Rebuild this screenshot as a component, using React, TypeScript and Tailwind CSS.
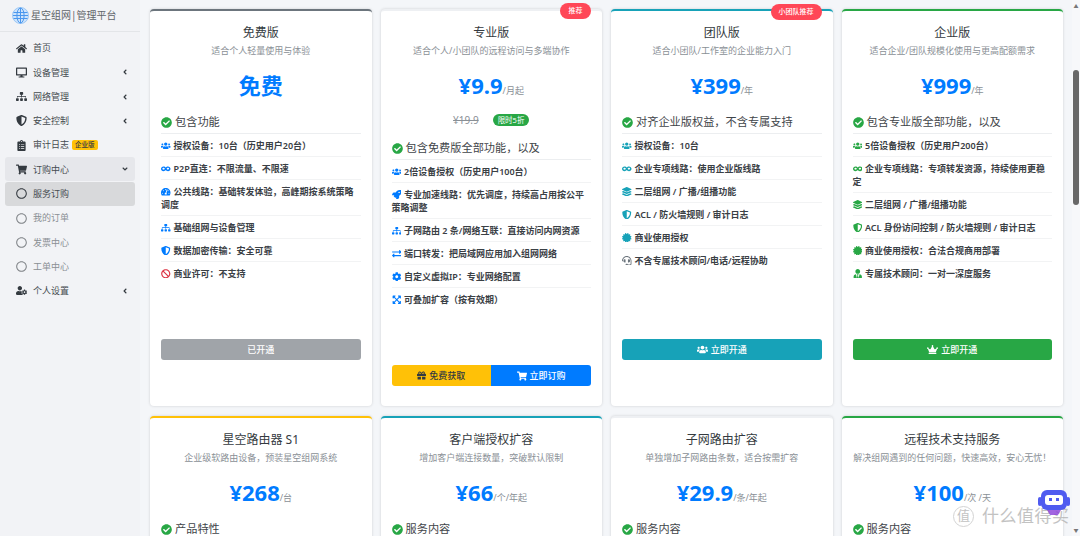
import React from "react";
import {
  FaHome, FaDesktop, FaSitemap, FaShieldAlt, FaClipboardList, FaShoppingCart, FaRegCircle, FaUserCog,
  FaAngleLeft, FaAngleDown, FaCheckCircle, FaUsers, FaInfinity, FaTachometerAlt, FaBan, FaRocket,
  FaExchangeAlt, FaCog, FaExpandArrowsAlt, FaLayerGroup, FaCertificate, FaHeadset, FaUserTie, FaGift, FaCrown,
} from "react-icons/fa";

type Item = { icon: React.ElementType; text: string; red?: boolean; gray?: boolean };
type Plan = {
  title: string; sub: string; price: string; unit?: string; top: string; accent: string; heading: string;
  items: Item[]; badge?: string; badgeClass?: string; old?: boolean; button?: React.ReactNode;
};

const plans: Plan[] = [
  {
    title: "免费版", sub: "适合个人轻量使用与体验", price: "免费", top: "border-t-[#6c757d]", accent: "text-[#007bff]", heading: "包含功能",
    items: [
      { icon: FaUsers, text: "授权设备：10台（历史用户20台）" },
      { icon: FaInfinity, text: "P2P直连：不限流量、不限速" },
      { icon: FaTachometerAlt, text: "公共线路：基础转发体验，高峰期按系统策略调度" },
      { icon: FaSitemap, text: "基础组网与设备管理" },
      { icon: FaShieldAlt, text: "数据加密传输：安全可靠" },
      { icon: FaBan, text: "商业许可：不支持", red: true },
    ],
    button: <button className="flex h-[21px] w-full items-center justify-center rounded-[3px] bg-[#a0a4a9] text-[9px] font-medium text-white">已开通</button>,
  },
  {
    title: "专业版", sub: "适合个人/小团队的远程访问与多端协作", price: "¥9.9", unit: "/月起", top: "border-t-[#eef0f3]", accent: "text-[#007bff]", heading: "包含免费版全部功能，以及",
    badge: "推荐", badgeClass: "right-[11px] top-[-8px] w-[31px]", old: true,
    items: [
      { icon: FaUsers, text: "2倍设备授权（历史用户100台）" },
      { icon: FaRocket, text: "专业加速线路：优先调度，持续高占用按公平策略调整" },
      { icon: FaSitemap, text: "子网路由 2 条/网络互联：直接访问内网资源" },
      { icon: FaExchangeAlt, text: "端口转发：把局域网应用加入组网网络" },
      { icon: FaCog, text: "自定义虚拟IP：专业网络配置" },
      { icon: FaExpandArrowsAlt, text: "可叠加扩容（按有效期）" },
    ],
    button: (
      <div className="flex h-[21px] w-full overflow-hidden rounded-[3px] text-[9px] font-medium">
        <button className="flex flex-1 items-center justify-center gap-[3px] bg-[#ffc107] text-[#343a40]"><FaGift className="text-[9px]" />免费获取</button>
        <button className="flex flex-1 items-center justify-center gap-[3px] bg-[#007bff] text-white"><FaShoppingCart className="text-[10px]" />立即订购</button>
      </div>
    ),
  },
  {
    title: "团队版", sub: "适合小团队/工作室的企业能力入门", price: "¥399", unit: "/年", top: "border-t-[#17a2b8]", accent: "text-[#17a2b8]", heading: "对齐企业版权益，不含专属支持",
    badge: "小团队推荐", badgeClass: "right-[11px] top-[-7px] w-[51px]",
    items: [
      { icon: FaUsers, text: "授权设备：10台" },
      { icon: FaInfinity, text: "企业专项线路：使用企业版线路" },
      { icon: FaLayerGroup, text: "二层组网 / 广播/组播功能" },
      { icon: FaShieldAlt, text: "ACL / 防火墙规则 / 审计日志" },
      { icon: FaCertificate, text: "商业使用授权" },
      { icon: FaHeadset, text: "不含专属技术顾问/电话/远程协助", gray: true },
    ],
    button: <button className="flex h-[21px] w-full items-center justify-center gap-[3px] rounded-[3px] bg-[#17a2b8] text-[9px] font-medium text-white"><FaUsers className="text-[11px]" />立即开通</button>,
  },
  {
    title: "企业版", sub: "适合企业/团队规模化使用与更高配额需求", price: "¥999", unit: "/年", top: "border-t-[#28a745]", accent: "text-[#28a745]", heading: "包含专业版全部功能，以及",
    items: [
      { icon: FaUsers, text: "5倍设备授权（历史用户200台）" },
      { icon: FaInfinity, text: "企业专项线路：专项转发资源，持续使用更稳定" },
      { icon: FaLayerGroup, text: "二层组网 / 广播/组播功能" },
      { icon: FaShieldAlt, text: "ACL 身份访问控制 / 防火墙规则 / 审计日志" },
      { icon: FaCertificate, text: "商业使用授权：合法合规商用部署" },
      { icon: FaUserTie, text: "专属技术顾问：一对一深度服务" },
    ],
    button: <button className="flex h-[21px] w-full items-center justify-center gap-[3px] rounded-[3px] bg-[#28a745] text-[9px] font-medium text-white"><FaCrown className="text-[11px]" />立即开通</button>,
  },
];

const extras: Plan[] = [
  { title: "星空路由器 S1", sub: "企业级软路由设备，预装星空组网系统", price: "¥268", unit: "/台", top: "border-t-[#ffc107]", accent: "", heading: "产品特性", items: [] },
  { title: "客户端授权扩容", sub: "增加客户端连接数量，突破默认限制", price: "¥66", unit: "/个/年起", top: "border-t-[#17a2b8]", accent: "", heading: "服务内容", items: [] },
  { title: "子网路由扩容", sub: "单独增加子网路由条数，适合按需扩容", price: "¥29.9", unit: "/条/年起", top: "border-t-[#eef0f3]", accent: "", heading: "服务内容", items: [] },
  { title: "远程技术支持服务", sub: "解决组网遇到的任何问题，快速高效，安心无忧！", price: "¥100", unit: "/次 /天", top: "border-t-[#28a745]", accent: "", heading: "服务内容", items: [] },
];

const nav: { icon: React.ElementType; label: string; arrow?: "left" | "down"; tag?: boolean; cls?: string; sub?: boolean; active?: boolean }[] = [
  { icon: FaHome, label: "首页" },
  { icon: FaDesktop, label: "设备管理", arrow: "left" },
  { icon: FaSitemap, label: "网络管理", arrow: "left" },
  { icon: FaShieldAlt, label: "安全控制", arrow: "left" },
  { icon: FaClipboardList, label: "审计日志", tag: true },
  { icon: FaShoppingCart, label: "订购中心", arrow: "down", cls: "bg-[#e6e7eb]" },
  { icon: FaRegCircle, label: "服务订购", sub: true, active: true },
  { icon: FaRegCircle, label: "我的订单", sub: true },
  { icon: FaRegCircle, label: "发票中心", sub: true },
  { icon: FaRegCircle, label: "工单中心", sub: true },
  { icon: FaUserCog, label: "个人设置", arrow: "left" },
];

function Card({ plan }: { plan: Plan }) {
  return (
    <div className={`relative flex flex-col rounded-[4px] border-t-2 bg-white px-[11px] pb-5 shadow-[0_0_3px_rgba(0,0,0,0.16)] ${plan.top}`}>
      {plan.badge && (
        <span className={`absolute flex h-4 items-center justify-center rounded-full bg-[#ff4757] text-[7px] font-medium text-white ${plan.badgeClass}`}>{plan.badge}</span>
      )}
      <h3 className="mt-[13px] text-center text-[12px] leading-[18px] text-[#343a40]">{plan.title}</h3>
      <p className="mt-[2px] whitespace-nowrap text-center text-[9px] leading-[14px] text-[#8a9096]">{plan.sub}</p>
      <div className="mt-[6px] flex h-[38px] items-end justify-center text-[#007bff]">
        <span className="text-[22px] font-bold leading-[34px]">{plan.price}</span>
        {plan.unit && <span className="mb-[5px] text-[9px] leading-[12px] text-[#8a9096]">{plan.unit}</span>}
      </div>
      {plan.old && (
        <div className="mb-[2px] mt-[12px] flex h-3 items-center justify-center gap-[14px]">
          <s className="text-[10px] text-[#8a9096]">¥19.9</s>
          <span className="rounded-full bg-[#28a745] px-[5px] text-[7.5px] leading-3 text-white">限时5折</span>
        </div>
      )}
      <div className="mt-[11px] flex h-[21px] items-center gap-[3px] border-b border-[#eceef0] pb-[1px] text-[11.2px] text-[#3f4549]">
        <FaCheckCircle className="shrink-0 text-[11px] text-[#28a745]" />
        {plan.heading}
      </div>
      <ul className="min-h-[205px]">
        {plan.items.map((it, i) => {
          const Icon = it.icon;
          const color = it.red ? "text-[#dc3545]" : it.gray ? "text-[#6c757d]" : plan.accent;
          return (
            <li key={i} className={`pb-[4px] pt-[5px] text-[9px] font-semibold leading-[13px] text-[#3a4045] ${i < plan.items.length - 1 ? "border-b border-[#f2f3f4]" : ""}`}>
              <Icon className={`mr-[3px] inline-block align-[-1px] text-[9.5px] ${color}`} />
              {it.text}
            </li>
          );
        })}
      </ul>
      {plan.button}
    </div>
  );
}

export default function App() {
  return (
    <div
      className="relative flex h-[536px] w-[1080px] overflow-hidden bg-[#f4f6f9]"
      style={{ fontFamily: '"Noto Sans", "Noto Sans CJK SC", sans-serif' }}
    >
      <aside className="w-[140px] shrink-0 bg-[#f2f3f6]">
        <div className="flex h-[32px] items-center gap-[2px] border-b border-[#e3e5e8] pl-3">
          <svg width="17" height="17" viewBox="0 0 17 17" fill="none" stroke="#4a97ee" strokeWidth="1">
            <circle cx="8.5" cy="8.5" r="8" fill="#cfe4fb" stroke="#9cc8f6" />
            <ellipse cx="8.5" cy="8.5" rx="3.6" ry="7.5" />
            <path d="M8.5 1v15M1.5 5.5h14M1 8.5h15M1.5 11.5h14" />
          </svg>
          <span className="text-[10px] text-[#5f6469]">星空组网|管理平台</span>
        </div>
        <nav className="mt-[4px] flex flex-col gap-[0.3px] px-[5px]">
          {nav.map((n) => {
            const Icon = n.icon;
            return (
              <div
                key={n.label}
                className={`flex h-[24px] items-center rounded-[3px] pl-[10px] pr-[6px] text-[9px] ${n.active ? "bg-[#d8d9db] text-[#454b50]" : n.sub ? "text-[#8a8f94]" : "text-[#454b50]"} ${n.cls ?? ""}`}
              >
                <span className="mr-[6px] flex w-[12px] justify-center"><Icon className={`text-[11px] ${n.sub && !n.active ? "text-[#808488]" : "text-[#343a40]"}`} /></span>
                <span>{n.label}</span>
                {n.tag && <span className="ml-[3px] rounded-[2px] bg-[#ffc107] px-[3px] text-[6.5px] font-medium leading-[10px] text-[#343a40]">企业版</span>}
                {n.arrow === "left" && <FaAngleLeft className="ml-auto text-[8px] text-[#343a40]" />}
                {n.arrow === "down" && <FaAngleDown className="ml-auto text-[8px] text-[#343a40]" />}
              </div>
            );
          })}
        </nav>
      </aside>

      <main className="min-w-0 flex-1 overflow-hidden pb-0 pl-[10px] pr-[9px] pt-[9px]">
        <div className="grid grid-cols-4 gap-x-[9px] gap-y-[10px]">
          {plans.map((p) => <Card key={p.title} plan={p} />)}
          {extras.map((p) => <Card key={p.title} plan={p} />)}
        </div>
      </main>

      <div className="flex w-[8px] shrink-0 flex-col items-center bg-[#f7f8fa]">
        <span className="mt-[3px] text-[5px] leading-[6px] text-[#777]">▲</span>
        <div className="mt-[61px] h-[135px] w-[6px] rounded-full bg-[#686868]" />
        <span className="mb-[3px] mt-auto text-[5px] leading-[6px] text-[#777]">▼</span>
      </div>

      <div className="absolute left-[953px] top-[505px] flex items-center gap-2 text-[#b4b4b4] opacity-80">
        <span className="flex size-[21px] items-center justify-center rounded-full border border-[#c9c9c9] text-[13px]">值</span>
        <span className="text-[17px] leading-[22px] tracking-[0.5px]">什么值得买</span>
      </div>
      <svg className="absolute left-[1038px] top-[490px]" width="32" height="26" viewBox="0 0 32 26">
        <rect x="0" y="7" width="4" height="9" rx="2" fill="#4f5bf0" />
        <rect x="28" y="7" width="4" height="9" rx="2" fill="#4f5bf0" />
        <rect x="3" y="0" width="26" height="20" rx="6" fill="#4f5bf0" />
        <rect x="7" y="5" width="18" height="10" rx="3" fill="#fff" />
        <rect x="11" y="8" width="3" height="3" fill="#4f5bf0" />
        <rect x="18" y="8" width="3" height="3" fill="#4f5bf0" />
        <path d="M9 20h14l-3 5H12z" fill="#8b3fd9" opacity="0.8" />
      </svg>
    </div>
  );
}
